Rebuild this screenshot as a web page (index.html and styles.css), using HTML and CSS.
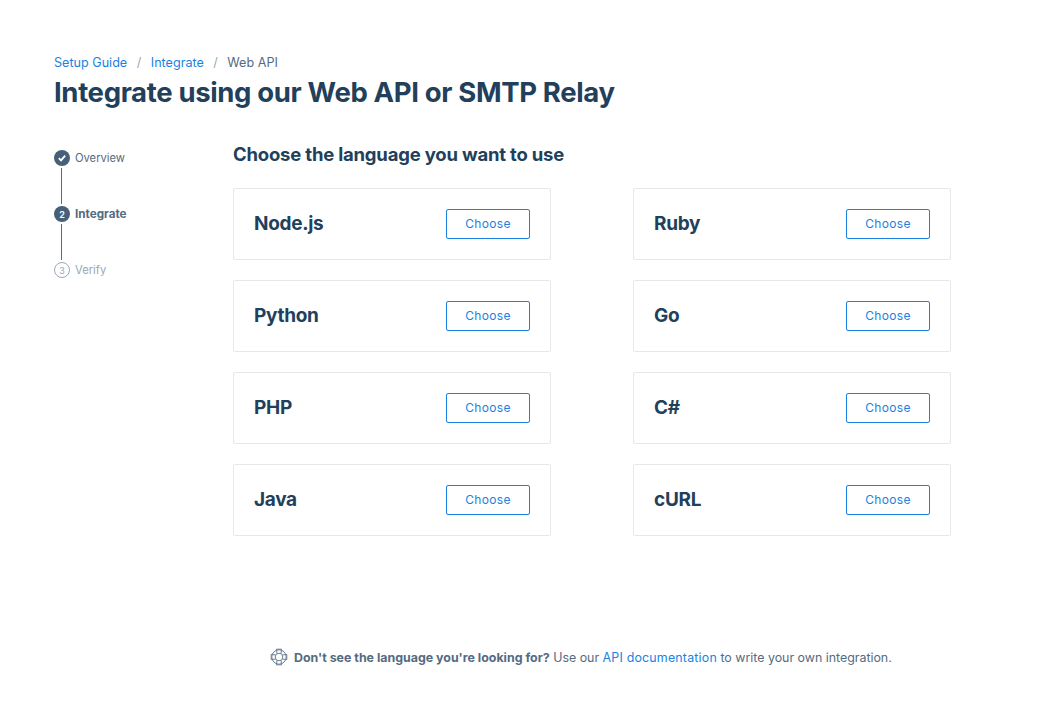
FILE: index.html
```html
<!DOCTYPE html>
<html lang="en">
<head>
    <meta charset="UTF-8">
    <title>Integrate using our Web API or SMTP Relay</title>
    <link rel="stylesheet" href="styles.css">
</head>
<body>
    <div class="page">
        <header class="page-header">
            <nav class="breadcrumb">
                <a href="#">Setup Guide</a>
                <span class="sep">/</span>
                <a href="#">Integrate</a>
                <span class="sep">/</span>
                <span>Web API</span>
            </nav>
            <h1>Integrate using our Web API or SMTP Relay</h1>
        </header>

        <div class="content">
            <ol class="steps">
                <li class="step done">
                    <span class="dot">
                        <svg width="8" height="8" viewBox="0 0 8 8"><path d="M0.8 4.2 3 6.4 7.2 1.6" fill="none" stroke="#fff" stroke-width="1.8"/></svg>
                    </span>
                    Overview
                </li>
                <li class="step current"><span class="dot">2</span>Integrate</li>
                <li class="step todo"><span class="dot">3</span>Verify</li>
            </ol>

            <main class="languages">
                <h2>Choose the language you want to use</h2>
                <div class="lang-grid">
                    <div class="card"><h3>Node.js</h3><button>Choose</button></div>
                    <div class="card"><h3>Ruby</h3><button>Choose</button></div>
                    <div class="card"><h3>Python</h3><button>Choose</button></div>
                    <div class="card"><h3>Go</h3><button>Choose</button></div>
                    <div class="card"><h3>PHP</h3><button>Choose</button></div>
                    <div class="card"><h3>C#</h3><button>Choose</button></div>
                    <div class="card"><h3>Java</h3><button>Choose</button></div>
                    <div class="card"><h3>cURL</h3><button>Choose</button></div>
                </div>
            </main>
        </div>

        <footer class="help">
            <svg class="help-icon" width="18" height="18" viewBox="0 0 18 18" fill="none" stroke="#6b7f93" stroke-width="1">
                <circle cx="9" cy="9" r="7.2"/>
                <circle cx="9" cy="9" r="3.8"/>
                <path d="M6.4 1.2H11.6L11 5.6M6.4 1.2 7 5.6M6.4 16.8H11.6L11 12.4M6.4 16.8 7 12.4M1.2 6.4V11.6L5.6 11M1.2 6.4 5.6 7M16.8 6.4V11.6L12.4 11M16.8 6.4 12.4 7"/>
            </svg>
            <p><strong>Don't see the language you're looking for?</strong> Use our <a href="#">API documentation</a> to write your own integration.</p>
        </footer>
    </div>
</body>
</html>
```

FILE: styles.css
```css
body {
    font-family: 'Inter', 'Liberation Sans', sans-serif;
    margin: 0;
    padding: 0;
    background: #fff;
    color: #294661;
}

a {
    color: #1a82e2;
    text-decoration: none;
}

.page {
    width: 1052px;
    height: 706px;
    padding: 54px 0 0 54px;
    box-sizing: border-box;
}

.breadcrumb {
    display: flex;
    gap: 9.5px;
    font-size: 12.6px;
    line-height: 17px;
    color: #546b81;
}

.breadcrumb .sep {
    color: #9aa7b3;
}

h1 {
    margin: 3px 0 0;
    font-size: 27.5px;
    line-height: 36px;
    font-weight: 700;
    letter-spacing: -0.35px;
    color: #223f5b;
}

.content {
    display: flex;
    margin-top: 34px;
}

.steps {
    list-style: none;
    margin: 0;
    padding: 0;
    width: 179px;
    flex-shrink: 0;
}

.step {
    position: relative;
    display: flex;
    align-items: center;
    gap: 5px;
    height: 16px;
    margin: 6px 0 40px;
    font-size: 11.2px;
    color: #546b81;
}

.dot {
    display: flex;
    align-items: center;
    justify-content: center;
    width: 16px;
    height: 16px;
    border-radius: 50%;
    background: #466079;
    color: #fff;
    font-size: 9px;
    font-weight: 600;
    box-sizing: border-box;
}

.step.current {
    font-size: 11.7px;
    font-weight: 700;
}

.step.todo {
    color: #9aa7b3;
}

.step.todo .dot {
    background: #fff;
    border: 1px solid #9aa7b3;
    color: #9aa7b3;
    font-weight: 400;
}

/* connector between two steps */
.step:not(.todo)::after {
    content: '';
    position: absolute;
    left: 7px;
    top: 18px;
    width: 1px;
    height: 36px;
    background: #546b81;
}

.languages {
    margin-top: -2px;
}

.languages h2 {
    margin: 0 0 22px;
    font-size: 18.5px;
    line-height: 24px;
    font-weight: 700;
    letter-spacing: -0.2px;
    color: #223f5b;
}

.lang-grid {
    display: grid;
    grid-template-columns: 318px 318px;
    grid-auto-rows: 72px;
    column-gap: 82px;
    row-gap: 20px;
}

.card {
    display: flex;
    justify-content: space-between;
    align-items: center;
    padding: 0 20px;
    border: 1px solid #e6e9ec;
    border-radius: 2px;
}

.card h3 {
    margin: 0 0 2px;
    font-size: 19px;
    font-weight: 700;
    letter-spacing: -0.3px;
    color: #223f5b;
}

button {
    width: 84px;
    height: 30px;
    padding: 0 0 2px;
    background: #fff;
    border: 1px solid #1a82e2;
    border-radius: 2px;
    color: #1a82e2;
    font-family: inherit;
    font-size: 12px;
    letter-spacing: 0.3px;
    cursor: pointer;
}

.help {
    display: flex;
    align-items: center;
    gap: 6px;
    margin: 112px 0 0 216px;
    font-size: 12.4px;
    color: #546b81;
}

.help p {
    margin: 0;
}

.help a {
    letter-spacing: 0.2px;
}

.help strong {
    font-weight: 700;
}

.help-icon {
    flex-shrink: 0;
}
```
